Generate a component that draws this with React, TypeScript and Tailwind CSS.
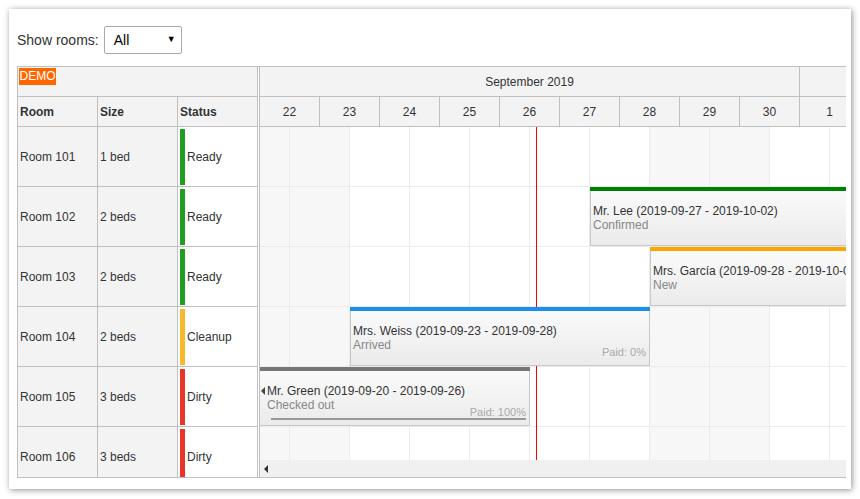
import React from 'react';

type Room = { name: string; size: string; status: string; color: string };

const rooms: Room[] = [
  { name: 'Room 101', size: '1 bed', status: 'Ready', color: 'bg-[#1f9e1f]' },
  { name: 'Room 102', size: '2 beds', status: 'Ready', color: 'bg-[#1f9e1f]' },
  { name: 'Room 103', size: '2 beds', status: 'Ready', color: 'bg-[#1f9e1f]' },
  { name: 'Room 104', size: '2 beds', status: 'Cleanup', color: 'bg-[#f9b82b]' },
  { name: 'Room 105', size: '3 beds', status: 'Dirty', color: 'bg-[#ea3427]' },
  { name: 'Room 106', size: '3 beds', status: 'Dirty', color: 'bg-[#ea3427]' },
];

const days = ['22', '23', '24', '25', '26', '27', '28', '29', '30', '1', '2'];

// cells run noon to noon, the first one is the half from 21st noon
const cells = [
  { w: 'w-[30px]', weekend: true },
  { w: 'w-[60px]', weekend: true },
  { w: 'w-[60px]', weekend: false },
  { w: 'w-[60px]', weekend: false },
  { w: 'w-[60px]', weekend: false },
  { w: 'w-[60px]', weekend: false },
  { w: 'w-[60px]', weekend: false },
  { w: 'w-[60px]', weekend: true },
  { w: 'w-[60px]', weekend: true },
  { w: 'w-[60px]', weekend: false },
  { w: 'w-[60px]', weekend: false },
];

type Booking = {
  pos: string;
  bar: string;
  text: string;
  status: string;
  paid?: string;
  progress?: boolean;
  cutLeft?: boolean;
};

const bookings: Booking[] = [
  { pos: 'top-[60px] left-[330px] w-[600px]', bar: 'bg-[#008000]', text: 'Mr. Lee (2019-09-27 - 2019-10-02)', status: 'Confirmed' },
  { pos: 'top-[120px] left-[390px] w-[600px]', bar: 'bg-[#ffa500]', text: 'Mrs. García (2019-09-28 - 2019-10-03)', status: 'New' },
  { pos: 'top-[180px] left-[90px] w-[300px]', bar: 'bg-[#1a8ff0]', text: 'Mrs. Weiss (2019-09-23 - 2019-09-28)', status: 'Arrived', paid: 'Paid: 0%' },
  { pos: 'top-[240px] left-[-2px] w-[272px]', bar: 'bg-[#777777]', text: 'Mr. Green (2019-09-20 - 2019-09-26)', status: 'Checked out', paid: 'Paid: 100%', progress: true, cutLeft: true },
];

const Event: React.FC<{ b: Booking }> = ({ b }) => (
  <div className={`absolute h-[59px] flex flex-col ${b.pos}`}>
    <div className={`h-[4px] shrink-0 ${b.bar}`}></div>
    <div className="relative flex-1 border border-t-0 border-[#c8c8c8] bg-linear-to-b from-[#fafafa] to-[#ebebeb] pl-[2px] pt-[13px] leading-[14px] whitespace-nowrap overflow-hidden">
      <div className="flex items-center">
        {b.cutLeft && (
          <span className="w-0 h-0 mr-[2px] border-y-[4px] border-y-transparent border-r-[4px] border-r-[#444]"></span>
        )}
        <span>{b.text}</span>
      </div>
      <div className={`text-[#888] ${b.cutLeft ? 'pl-[6px]' : ''}`}>{b.status}</div>
      {b.paid && (
        <div className="absolute right-[3px] bottom-[6px] text-[11px] leading-[13px] text-[#aaa]">{b.paid}</div>
      )}
      {b.progress && <div className="absolute left-[12px] right-[3px] bottom-[5px] h-[2px] bg-[#999]"></div>}
    </div>
  </div>
);

export default function App() {
  return (
    <div className="p-[9px] bg-white font-['Liberation_Sans',Arial,sans-serif] text-[#333]">
      <div className="w-[842px] h-[480px] bg-white shadow-[1px_1px_6px_rgba(0,0,0,0.45)] pt-[17px] pl-2">
        <div className="flex items-center h-[28px]">
          <span className="text-[14px] mr-[5px]">Show rooms:</span>
          <div className="w-[78px] h-[28px] border border-[#a9a9a9] rounded-[2px] flex items-center justify-between pl-[9px] pr-[5px] text-[14px] text-black">
            <span>All</span>
            <span className="text-[9px]">▼</span>
          </div>
        </div>

        <div className="mt-3 w-[829px] flex border-l border-t border-[#c0c0c0] text-[12px]">
          {/* row headers */}
          <div className="w-[240px] shrink-0">
            <div className="h-[30px] border-b border-r border-[#c0c0c0] bg-[#f3f3f3]">
              <span className="ml-[1px] inline-block w-[37px] h-[17px] leading-[17px] text-center bg-[#ff6600] text-white">DEMO</span>
            </div>
            <div className="h-[30px] flex border-b border-[#c0c0c0] bg-[#f3f3f3] font-bold">
              <div className="w-[80px] border-r border-[#c0c0c0] pl-[2px] flex items-center">Room</div>
              <div className="w-[80px] border-r border-[#c0c0c0] pl-[2px] flex items-center">Size</div>
              <div className="w-[80px] border-r border-[#c0c0c0] pl-[2px] flex items-center">Status</div>
            </div>
            {rooms.map((r, i) => (
              <div key={r.name} className={`border-b border-[#c0c0c0] overflow-hidden ${i === 5 ? 'h-[51px]' : 'h-[60px]'}`}>
                <div className="flex h-[59px]">
                  <div className="w-[80px] border-r border-[#c0c0c0] bg-[#f3f3f3] pl-[2px] pt-[1px] flex items-center">{r.name}</div>
                  <div className="w-[80px] border-r border-[#c0c0c0] bg-[#f3f3f3] pl-[2px] pt-[1px] flex items-center">{r.size}</div>
                  <div className="w-[80px] border-r border-[#c0c0c0] bg-white flex items-stretch pl-[2px] pt-[2px] pb-[1px]">
                    <div className={`w-[5px] ${r.color}`}></div>
                    <div className="pl-[2px] flex items-center">{r.status}</div>
                  </div>
                </div>
              </div>
            ))}
          </div>

          <div className="w-[1px] shrink-0 bg-white border-b border-[#c0c0c0]"></div>

          {/* timeline */}
          <div className="flex-1 min-w-0 border-l border-[#c0c0c0] overflow-hidden">
            <div className="h-[30px] flex border-b border-[#c0c0c0] bg-[#f3f3f3]">
              <div className="w-[540px] shrink-0 border-r border-[#c0c0c0] flex items-center justify-center">September 2019</div>
              <div className="w-[600px] shrink-0"></div>
            </div>
            <div className="h-[30px] flex border-b border-[#c0c0c0] bg-[#f3f3f3]">
              {days.map((d) => (
                <div key={d} className="w-[60px] shrink-0 border-r border-[#c0c0c0] flex items-center justify-center">{d}</div>
              ))}
            </div>
            <div className="relative h-[333px] overflow-hidden">
              {rooms.map((r) => (
                <div key={r.name} className="h-[60px] flex border-b border-[#ebebeb]">
                  {cells.map((c, j) => (
                    <div key={j} className={`shrink-0 border-r border-[#ebebeb] ${c.w} ${c.weekend ? 'bg-[#f7f7f7]' : 'bg-white'}`}></div>
                  ))}
                </div>
              ))}
              <div className="absolute left-[276px] top-0 bottom-0 w-px bg-[#ff0000]"></div>
              {bookings.map((b) => (
                <Event key={b.text} b={b} />
              ))}
            </div>
            <div className="h-[18px] bg-[#f0f0f0] border-b border-[#c0c0c0] flex items-center pl-[4px]">
              <span className="w-0 h-0 border-y-[4px] border-y-transparent border-r-[4px] border-r-[#333]"></span>
            </div>
          </div>
        </div>
      </div>
    </div>
  );
}
